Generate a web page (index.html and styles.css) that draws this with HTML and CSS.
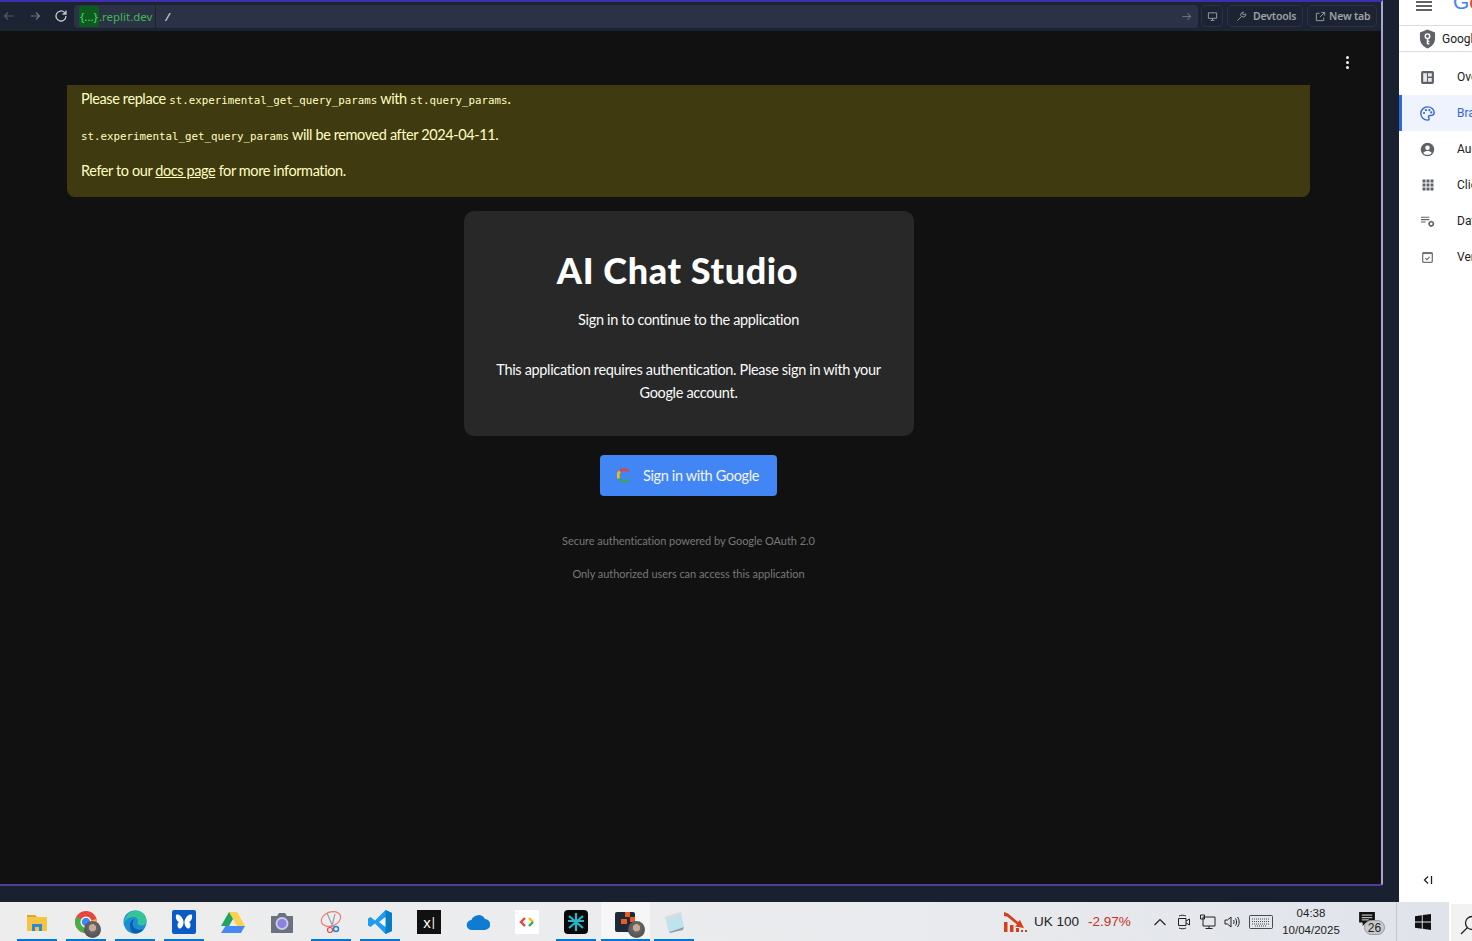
FILE: index.html
```html
<!DOCTYPE html>
<html lang="en">
<head>
    <meta charset="UTF-8">
    <title>AI Chat Studio</title>
    <link rel="stylesheet" href="styles.css">
</head>
<body>
    <div class="desktop">
        <div class="workspace">
            <div class="browser">
                <div class="toolbar">
                    <svg class="nav-icon dim" viewBox="0 0 12 12"><path d="M10.500 6H1.500M5 2.500 1.500 6 5 9.500"/></svg>
                    <svg class="nav-icon" viewBox="0 0 12 12"><path d="M1.500 6h9M7 2.500 10.500 6 7 9.500"/></svg>
                    <svg class="nav-icon bright" viewBox="0 0 14 14"><path d="M12 7a5 5 0 1 1-1.500-3.600L12 5M12 1.500V5H8.500"/></svg>
                    <div class="urlbar">
                        <span class="url-host"><span class="url-repl">{...}</span>.replit.dev</span>
                        <span class="url-path">/</span>
                        <svg class="url-go" viewBox="0 0 12 12"><path d="M1.500 6h9M7 2.500 10.500 6 7 9.500"/></svg>
                    </div>
                    <button class="tool-btn square">
                        <svg viewBox="0 0 12 12"><path d="M1.500 2h9v6h-9zM6 8v2M4 10.200h4"/></svg>
                    </button>
                    <button class="tool-btn devtools">
                        <svg viewBox="0 0 12 12"><path d="M1.500 10.500 6 6M6 6a2.600 2.600 0 0 1 1-4.400L8.200 1 7 3l1.800 1.400L10.600 3a2.600 2.600 0 0 1-4 3"/></svg>
                        Devtools
                    </button>
                    <button class="tool-btn newtab">
                        <svg viewBox="0 0 12 12"><path d="M9.500 7v3.500h-8v-8H5M7 1.500h3.500V5M10.500 1.500 5.500 6.500"/></svg>
                        New tab
                    </button>
                </div>
                <div class="app">
                    <div class="kebab"><i></i><i></i><i></i></div>
                    <div class="alert">
                        <p>Please replace <code>st.experimental_get_query_params</code> with <code>st.query_params</code>.</p>
                        <p><code>st.experimental_get_query_params</code> will be removed after 2024-04-11.</p>
                        <p>Refer to our <a href="#">docs page</a> for more information.</p>
                    </div>
                    <div class="login">
                        <div class="card">
                            <h1>AI Chat Studio</h1>
                            <p class="lead">Sign in to continue to the application</p>
                            <p class="note">This application requires authentication. Please sign in with your Google account.</p>
                        </div>
                        <button class="google-btn">
                            <svg viewBox="0 0 16 16" fill="none" stroke-width="3">
                                <path d="M13 3.200A7 7 0 0 0 3 3.400" stroke="#ea4335"/>
                                <path d="M3.200 3.200A7 7 0 0 0 2.400 11.500" stroke="#fbbc05"/>
                                <path d="M2.300 11.200A7 7 0 0 0 13 12.800" stroke="#34a853"/>
                            </svg>
                            Sign in with Google
                        </button>
                        <p class="fine first">Secure authentication powered by Google OAuth 2.0</p>
                        <p class="fine">Only authorized users can access this application</p>
                    </div>
                </div>
            </div>
        </div>

        <div class="sidebar">
            <div class="side-top">
                <div class="burger"><i></i><i></i><i></i></div>
                <span class="g-logo"><b class="blue">G</b><b class="red">o</b></span>
            </div>
            <div class="side-project">
                <svg viewBox="0 0 18 20"><path d="M9 0 17 3v6.500c0 5-3.400 8.700-8 10.500-4.600-1.800-8-5.500-8-10.500V3z" fill="#5f6368"/><circle cx="9" cy="7" r="2.400" fill="none" stroke="#fff" stroke-width="1.500"/><path d="M9 9.500V15.500M9 12.500h2M9 15h2" stroke="#fff" stroke-width="1.500"/></svg>
                <span>Google Auth Platform</span>
            </div>
            <div class="side-nav">
                <div class="side-item">
                    <svg viewBox="0 0 14 14"><rect x="1" y="1" width="12" height="12" rx="1.500" fill="#5f6368"/><path d="M3 3h3.500v8H3zM7.500 3H11v3H7.500zM7.500 7.500H11V11H7.500z" fill="#e8eaed"/></svg>
                    <span>Overview</span>
                </div>
                <div class="side-item active">
                    <svg viewBox="0 0 14 14"><path d="M7 .8a6.200 6.200 0 0 0 0 12.400c1 0 1.500-.7 1.500-1.400 0-.9-.6-1-.6-1.800 0-.7.6-1.200 1.300-1.200h1.300c1.500 0 2.700-1.200 2.700-2.700C13.200 3 10.400.8 7 .8z" fill="none" stroke="#3367d6" stroke-width="1.300"/><circle cx="3.800" cy="6.500" r="1" fill="#3367d6"/><circle cx="5.500" cy="3.900" r="1" fill="#3367d6"/><circle cx="8.700" cy="3.900" r="1" fill="#3367d6"/><circle cx="10.500" cy="6" r="1" fill="#3367d6"/></svg>
                    <span>Branding</span>
                </div>
                <div class="side-item">
                    <svg viewBox="0 0 14 14"><circle cx="7" cy="7" r="6.300" fill="#5f6368"/><circle cx="7" cy="5.300" r="2.100" fill="#fff"/><path d="M3 10.200c1-1.400 2.500-1.900 4-1.900s3 .5 4 1.900c-1 1.100-2.400 1.800-4 1.800s-3-.7-4-1.800z" fill="#fff"/></svg>
                    <span>Audience</span>
                </div>
                <div class="side-item">
                    <svg class="grid-icon" viewBox="0 0 12 12"><path d="M.5.500h3v3h-3zM4.500.500h3v3h-3zM8.500.500h3v3h-3zM.5 4.500h3v3h-3zM4.500 4.500h3v3h-3zM8.500 4.500h3v3h-3zM.5 8.500h3v3h-3zM4.500 8.500h3v3h-3zM8.500 8.500h3v3h-3z" fill="#5f6368"/></svg>
                    <span>Clients</span>
                </div>
                <div class="side-item">
                    <svg viewBox="0 0 16 14"><path d="M1 2.500h9M1 5h9M1 7.500h5" stroke="#5f6368" stroke-width="1.100" fill="none"/><circle cx="12" cy="9.500" r="2.200" fill="none" stroke="#5f6368" stroke-width="1.600"/><path d="M12 6.200v1M12 11.800v1M8.800 9.500h1M14.200 9.500h1M9.800 7.300l.7.7M13.500 11l.7.7M14.200 7.300l-.7.7M10.500 11l-.7.7" stroke="#5f6368" stroke-width="1"/></svg>
                    <span>Data access</span>
                </div>
                <div class="side-item">
                    <svg viewBox="0 0 14 14"><rect x="2.500" y="2.500" width="9" height="9" rx="1" fill="none" stroke="#70757a" stroke-width="1.200"/><path d="M2.500 3h9" stroke="#70757a" stroke-width="1.600"/><path d="m5 7.500 1.500 1.500L9 6.500" fill="none" stroke="#5f6368" stroke-width="1"/></svg>
                    <span>Verification centre</span>
                </div>
            </div>
            <div class="side-foot">
                <svg viewBox="0 0 10 10"><path d="M5 1.500 1.500 5 5 8.500M8.500 1v8" fill="none" stroke="#202124" stroke-width="1.300"/></svg>
            </div>
        </div>
    </div>

    <div class="taskbar">
        <div class="apps">
            <div class="app-cell open part">
                <svg viewBox="0 0 24 24"><path d="M2 5h8l2 2h10v14H2z" fill="#f4c542"/><path d="M2 5h8l2 2H2z" fill="#e0a526"/><path d="M7 14h10v7h-3v-4h-4v4H7z" fill="#2b8ad8"/></svg>
            </div>
            <div class="app-cell open part">
                <svg viewBox="0 0 24 24"><circle cx="12" cy="12" r="11" fill="#e8453c"/><path d="M12 12 22.500 9A11 11 0 0 1 12 23z" fill="#f9bb2d"/><path d="M12 12 12 23A11 11 0 0 1 2.500 6.500z" fill="#4aae48"/><circle cx="12" cy="12" r="5.500" fill="#fff"/><circle cx="12" cy="12" r="4.200" fill="#4285f4"/></svg>
                <i class="avatar"></i>
            </div>
            <div class="app-cell open">
                <svg viewBox="0 0 24 24"><circle cx="12" cy="12" r="11.500" fill="#1b8ed6"/><path d="M1 13C2 5 8 .5 13 .5c6 0 10.500 4.500 10.500 10 0 3-2 5-5 5-2.500 0-4-1-4-2.500C16 9 13 6.500 9.500 7 5 7.500 2.500 10 1 13z" fill="#35c49a"/><path d="M7 15c0-4 3-6 5-5.500C8.500 11 9 17 13 19c2.500 1.200 5.500 1 7.500-.5-2 3.500-5 5-8.500 5-3 0-5-4-5-8.500z" fill="#0c5ea8"/></svg>
            </div>
            <div class="app-cell open">
                <svg viewBox="0 0 24 24"><rect width="24" height="24" rx="2" fill="#0a5bc4"/><path d="M11.500 11C10 6 7 4 4.500 4.500 3 6 4 11 7 12c-2 1-2 5 0 6.500 2 .5 4-2 4.500-5zM12.500 11C14 6 17 4 19.500 4.500 21 6 20 11 17 12c2 1 2 5 0 6.500-2 .5-4-2-4.500-5z" fill="#fff"/></svg>
            </div>
            <div class="app-cell">
                <svg viewBox="0 0 24 22"><path d="M8 1h8l-8 14H0z" fill="#1fa463"/><path d="M8 1h8l8 14h-8z" fill="#ffd04b"/><path d="M4.500 15H24l-4 7H0z" fill="#4688f4"/></svg>
            </div>
            <div class="app-cell">
                <svg viewBox="0 0 24 24"><path d="M1 6h6l2-3h6l2 3h6v17H1z" fill="#69727d"/><circle cx="12" cy="13.500" r="6.500" fill="#c9c6f0"/><circle cx="12" cy="13.500" r="4.500" fill="#8a82e0"/></svg>
            </div>
            <div class="app-cell open">
                <svg viewBox="0 0 24 24" fill="none"><ellipse cx="12" cy="9" rx="10" ry="7" transform="rotate(-20 12 9)" stroke="#ee7a72" stroke-width="1.200"/><path d="M8 3l6 14M16 4 13 16" stroke="#9aa0a6" stroke-width="1.200"/><circle cx="11" cy="20" r="2.500" stroke="#e8453c" stroke-width="1.200"/><circle cx="17" cy="19" r="2.500" stroke="#2b7cd3" stroke-width="1.500"/></svg>
            </div>
            <div class="app-cell open">
                <svg viewBox="0 0 24 24"><path d="M17.500 0 24 3v18l-6.500 3L7 13.500l-4.500 3.500L0 15.500v-7L2.500 7 7 10.500z" fill="#1f9cf0"/><path d="M17.500 0 24 3v18l-6.500 3z" fill="#0a7cc4"/><path d="M17.500 7v10L11 12z" fill="#f2f4f7"/></svg>
            </div>
            <div class="app-cell">
                <div class="x-tile">x<span>|</span></div>
            </div>
            <div class="app-cell">
                <svg viewBox="0 0 24 24"><path d="M6 20a5 5 0 0 1-.6-10A7.500 7.500 0 0 1 19 9a5.500 5.500 0 0 1-.5 11z" fill="#0f7cd1"/></svg>
            </div>
            <div class="app-cell">
                <svg class="tile" viewBox="0 0 24 24"><rect width="24" height="24" fill="#fff"/><path d="m10 8-4 4 4 4" fill="none" stroke="#ea4335" stroke-width="2.400"/><path d="M14 8l4 4" fill="none" stroke="#fbbc05" stroke-width="2.400"/><path d="M18 12l-4 4" fill="none" stroke="#34a853" stroke-width="2.400"/></svg>
            </div>
            <div class="app-cell open">
                <svg viewBox="0 0 24 24"><rect width="24" height="24" rx="4" fill="#08090b"/><path d="M12 3v18M5 6l14 12M19 6 5 18M4 11h16" stroke="#29b6c8" stroke-width="2.200"/></svg>
            </div>
            <div class="app-cell open current">
                <svg class="small" viewBox="0 0 20 20"><rect width="20" height="20" rx="2" fill="#1e2a3a"/><path d="M10 0h5v5h-5zM15 5h5v5h-5zM6 7h6v5H6z" fill="#ee5a24"/></svg>
                <i class="avatar"></i>
            </div>
            <div class="app-cell open">
                <svg viewBox="0 0 24 24"><path d="M3 7 19 2l3 15-15 5z" fill="#bfe3ee"/><path d="M3 7 19 2l.5 3L4 10z" fill="#d9dde0"/><path d="M7 22l15-5-1 3-13 3z" fill="#8fa0aa"/></svg>
            </div>
        </div>

        <div class="tray">
            <svg class="stock" viewBox="0 0 24 22"><path d="M1 1 5 2.500 15 11l2-2 4 8-9-1.500 2-2L4 5.500 1 5z" fill="#d2401c"/><path d="M1 11h3.500v10H1zM7 14h3.500v7H7zM13 17h3v4h-3zM18 19h2v2h-2zM22 19h2v2h-2z" fill="#d2401c"/></svg>
            <span class="ticker">UK 100</span>
            <span class="ticker-down">-2.97%</span>
            <svg class="tray-caret" viewBox="0 0 12 8"><path d="M.5 7 6 1.500 11.500 7"/></svg>
            <svg class="tray-icon cam" viewBox="0 0 16 18"><path d="M2.500 5.500h7.500v7H2.500zM10 8l3.500-2v6L10 10M3 3c2-1 5-1 7 0M3 15c2 1 5 1 7 0"/></svg>
            <svg class="tray-icon" viewBox="0 0 16 18"><path d="M3 4h12v9H3zM9 13v2.500M5.500 15.500h7M.5 2h4v4h-4z"/></svg>
            <svg class="tray-icon" viewBox="0 0 16 18"><path d="M1 7h2.500L7 4v10l-3.500-3H1zM9.500 7c.8 1.200.8 2.800 0 4M11.500 5.500c1.500 2 1.500 5 0 7M13.500 4c2.200 3 2.200 7 0 10"/></svg>
            <svg class="tray-keys" viewBox="0 0 24 14"><rect x=".5" y=".5" width="23" height="13" rx="1"/><path d="M3 4h18M3 6.500h18M3 9h18M6 11h12" stroke-dasharray="1 1"/></svg>
            <div class="clock"><span>04:38</span><span>10/04/2025</span></div>
            <div class="notify">
                <svg viewBox="0 0 18 16"><path d="M0 0h18v12H8l-4 4v-4H0z" fill="#111"/><path d="M3 3.500h12M3 6.500h12M3 9h8" stroke="#fff"/></svg>
                <span>26</span>
            </div>
            <div class="tray-sep"></div>
            <svg class="win" viewBox="0 0 16 16"><path d="M0 2.200 6.800 1.200v6.200H0zM7.700 1.100 16 0v7.400H7.700zM0 8.400h6.800v6.300L0 13.800zM7.700 8.400H16V16l-8.300-1.200z" fill="#111"/></svg>
            <div class="search-box">
                <svg viewBox="0 0 20 20"><circle cx="12" cy="8" r="6.500" fill="none" stroke="#222" stroke-width="1.300"/><path d="M7.500 12.500 1 19" stroke="#222" stroke-width="1.300"/></svg>
            </div>
        </div>
    </div>
</body>
</html>
```

FILE: styles.css
```css
* {
    box-sizing: border-box;
}
html, body {
    margin: 0;
    padding: 0;
    height: 941px;
    overflow: hidden;
}
body {
    font-family: Lato, sans-serif;
    background-color: #1c2232;
}
p {
    margin: 0;
}
.desktop {
    display: flex;
    height: 902px;
}
.workspace {
    width: 1399px;
    background-color: #19202f;
}
.browser {
    width: 1383px;
    height: 886px;
    display: flex;
    flex-direction: column;
    border-top: 2px solid #3d2fae;
    border-right: 2px solid #a9a5cf;
    border-bottom: 2px solid #4b3f98;
    border-bottom-right-radius: 3px;
    background-color: #111;
}

/* browser toolbar */
.toolbar {
    height: 29px;
    flex: none;
    display: flex;
    align-items: center;
    padding: 0 0 1px 3px;
    background-color: #1c2333;
    color: #9da2a6;
}
.nav-icon {
    width: 12px;
    height: 12px;
    margin-right: 14px;
    fill: none;
    stroke: #70757f;
    stroke-width: 1.2;
}
.nav-icon.dim {
    stroke: #545a66;
}
.nav-icon.bright {
    width: 14px;
    height: 14px;
    margin-left: -1px;
    margin-right: 6px;
    stroke: #c2c8cc;
    stroke-width: 1.3;
}
.urlbar {
    width: 1125px;
    height: 23px;
    margin-right: 3px;
    display: flex;
    align-items: center;
    padding-left: 5px;
    border-radius: 4px;
    background-color: #2b3245;
    font-family: "Noto Sans", sans-serif;
    font-size: 11.500px;
}
.url-host {
    height: 100%;
    display: flex;
    align-items: center;
    padding-right: 3px;
    border-right: 1px solid #1c2333;
    color: #3fb950;
}
.url-repl {
    padding: 3px 1px;
    border-radius: 2px;
    background-color: #0b5c1e;
    color: #52d36c;
}
.url-path {
    margin-left: 9px;
    color: #e6e8ec;
    font-style: italic;
}
.url-go {
    width: 11px;
    height: 11px;
    margin-left: auto;
    margin-right: 6px;
    fill: none;
    stroke: #6c7280;
    stroke-width: 1.1;
}
.tool-btn {
    height: 22px;
    display: flex;
    align-items: center;
    margin-right: 4px;
    padding: 0;
    border: 1px solid #2b3245;
    border-radius: 5px;
    background-color: transparent;
    color: #9da2a6;
    font-family: "Noto Sans", sans-serif;
    font-size: 10.500px;
    font-weight: 600;
    letter-spacing: -0.2px;
}
.tool-btn svg {
    width: 11px;
    height: 11px;
    fill: none;
    stroke: #9da2a6;
    stroke-width: 1;
}
.square {
    width: 22px;
    justify-content: center;
}
.devtools {
    width: 76px;
    gap: 6px;
    padding-left: 8px;
}
.newtab {
    width: 70px;
    gap: 3px;
    padding-left: 7px;
}

/* streamlit page */
.app {
    position: relative;
    flex: 1;
    padding: 54px 71px 0 67px;
}
.kebab {
    position: absolute;
    top: 25px;
    left: 1346px;
    width: 4px;
    display: flex;
    flex-direction: column;
    gap: 2px;
}
.kebab i {
    width: 3px;
    height: 3px;
    border-radius: 50%;
    background-color: #f0f0f0;
}
.alert {
    height: 112px;
    padding: 2px 14px;
    border-radius: 0 0 8px 8px;
    background-color: #3f3a10;
    color: #ffffc2;
    font-size: 14.500px;
    letter-spacing: -0.4px;
    line-height: 24px;
}
.alert p {
    height: 24px;
    margin-bottom: 12px;
}
.alert code {
    font-family: "DejaVu Sans Mono", monospace;
    font-size: 10.800px;
    letter-spacing: 0;
}
.alert a {
    color: #ffffc2;
}
.login {
    display: flex;
    flex-direction: column;
    align-items: center;
    margin-top: 14px;
}
.card {
    width: 450px;
    height: 225px;
    padding: 33px 26px 0;
    border-radius: 10px;
    background-color: #282828;
    color: #fafafa;
    text-align: center;
}
.card h1 {
    margin: 0 22px 0 0;
    font-size: 36px;
    font-weight: 900;
    line-height: 52px;
    letter-spacing: 0.6px;
    color: #fff;
}
.lead, .note {
    font-size: 14.500px;
    letter-spacing: -0.33px;
    line-height: 23px;
}
.lead {
    margin-top: 12px;
}
.note {
    margin-top: 27px;
}
.google-btn {
    width: 177px;
    height: 41px;
    margin-top: 19px;
    display: flex;
    align-items: center;
    gap: 12px;
    padding: 0 0 0 17px;
    border: none;
    border-radius: 4px;
    background-color: #4285f4;
    color: #f3f6fd;
    font-family: Lato, sans-serif;
    font-size: 14.500px;
    letter-spacing: -0.37px;
}
.google-btn svg {
    width: 14px;
    height: 15px;
    flex: none;
}
.fine {
    color: #77787b;
    font-size: 11px;
    letter-spacing: -0.05px;
    line-height: 15px;
}
.fine.first {
    margin-top: 37px;
    margin-bottom: 18px;
}

/* cloud console panel */
.sidebar {
    width: 73px;
    height: 902px;
    display: flex;
    flex-direction: column;
    overflow: hidden;
    background-color: #fff;
    font-family: Roboto, sans-serif;
    color: #202124;
    font-size: 12px;
    white-space: nowrap;
}
.side-top {
    height: 26px;
    flex: none;
    display: flex;
    border-bottom: 1px solid #dadce0;
    padding-left: 17px;
    overflow: hidden;
}
.burger {
    width: 16px;
    flex: none;
    display: flex;
    flex-direction: column;
    gap: 2px;
    padding-top: 1px;
}
.burger i {
    height: 2px;
    background-color: #5f6368;
}
.g-logo {
    margin-left: 21px;
    margin-top: -13px;
    font-family: "Liberation Sans", sans-serif;
    font-size: 21px;
    line-height: 30px;
}
.g-logo b {
    font-weight: 400;
}
.blue {
    color: #4285f4;
}
.red {
    color: #ea4335;
}
.side-project {
    height: 26px;
    flex: none;
    display: flex;
    align-items: center;
    gap: 6px;
    padding-left: 20px;
    border-bottom: 1px solid #dadce0;
}
.side-project svg {
    width: 17px;
    height: 20px;
    flex: none;
}
.side-nav {
    padding-top: 7px;
    flex: 1;
}
.side-item {
    height: 36px;
    display: flex;
    align-items: center;
    padding-left: 21px;
}
.side-item svg {
    width: 15px;
    height: 15px;
    flex: none;
    margin-right: 22px;
}
.side-item .grid-icon {
    width: 12px;
    height: 12px;
    margin-left: 2px;
    margin-right: 23px;
}
.side-item.active {
    padding-left: 18px;
    border-left: 3px solid #3367d6;
    background-color: #eef3fd;
    color: #3367d6;
}
.side-foot {
    height: 42px;
    padding: 15px 0 0 24px;
}
.side-foot svg {
    width: 10px;
    height: 10px;
    display: block;
}

/* windows taskbar */
.taskbar {
    height: 39px;
    display: flex;
    align-items: stretch;
    background: linear-gradient(90deg, #ededed 0%, #eaebee 60%, #dfe3ea 100%);
    font-family: "Liberation Sans", sans-serif;
}
.apps {
    display: flex;
    gap: 9px;
    padding-left: 17px;
}
.app-cell {
    position: relative;
    width: 40px;
    display: flex;
    align-items: center;
    justify-content: center;
    padding-top: 1px;
}
.app-cell svg {
    width: 24px;
    height: 24px;
}
.app-cell svg.small {
    width: 20px;
    height: 22px;
}
.app-cell.open {
    border-bottom: 2px solid #0078d7;
    padding-top: 3px;
}
.app-cell.current {
    width: 49px;
    margin: 0 -4.500px;
    background-color: #f6f6f6;
}
.avatar {
    position: absolute;
    right: 5px;
    bottom: 1px;
    width: 17px;
    height: 17px;
    border-radius: 50%;
    background: radial-gradient(circle at 50% 40%, #c9a995 0 25%, #666 30%, #444 100%);
}
.x-tile {
    width: 24px;
    height: 24px;
    display: flex;
    align-items: center;
    justify-content: center;
    background-color: #111;
    color: #fff;
    font-size: 15px;
    line-height: 1;
}
.x-tile span {
    margin-left: 1px;
    font-size: 12px;
}
.tray {
    flex: 1;
    display: flex;
    align-items: center;
    padding-left: 309px;
    color: #222;
    white-space: nowrap;
}
.stock {
    width: 24px;
    height: 22px;
    flex: none;
}
.ticker {
    width: 44px;
    flex: none;
    margin-left: 7px;
    font-size: 13.500px;
}
.ticker-down {
    width: 44px;
    flex: none;
    margin-left: 10px;
    color: #c4311c;
    font-size: 13.500px;
}
.tray-caret {
    width: 12px;
    height: 8px;
    flex: none;
    margin-left: 22px;
    fill: none;
    stroke: #222;
    stroke-width: 1.200;
}
.tray-icon {
    width: 16px;
    height: 18px;
    flex: none;
    margin-left: 8px;
    fill: none;
    stroke: #222;
    stroke-width: 1;
}
.tray-icon.cam {
    margin-left: 10px;
}
.tray-keys {
    width: 24px;
    height: 14px;
    flex: none;
    margin-left: 9px;
    fill: none;
    stroke: #222;
    stroke-width: 0.800;
}
.clock {
    width: 58px;
    flex: none;
    margin-left: 9px;
    display: flex;
    flex-direction: column;
    align-items: center;
    font-size: 11.500px;
    line-height: 17px;
}
.notify {
    position: relative;
    width: 24px;
    height: 30px;
    flex: none;
    margin-left: 19px;
}
.notify svg {
    width: 16px;
    height: 14px;
    display: block;
    margin-top: 5px;
}
.notify span {
    position: absolute;
    left: 5px;
    top: 13px;
    width: 21px;
    height: 15px;
    border: 1px solid #999;
    border-radius: 8px;
    background-color: #c8c8c8;
    font-size: 12px;
    line-height: 14px;
    text-align: center;
}
.tray-sep {
    width: 1px;
    height: 39px;
    flex: none;
    margin-left: 13px;
    background-color: #c4c6ca;
}
.win {
    width: 16px;
    height: 16px;
    flex: none;
    margin-left: 18px;
}
.search-box {
    width: 24px;
    height: 39px;
    flex: none;
    margin-left: 18px;
    padding: 11px 0 0 9px;
    border-left: 2px solid #fff;
    border-top: 2px solid #fff;
    background-color: #f2f2f2;
    overflow: hidden;
}
.search-box svg {
    width: 20px;
    height: 20px;
    display: block;
}
```
